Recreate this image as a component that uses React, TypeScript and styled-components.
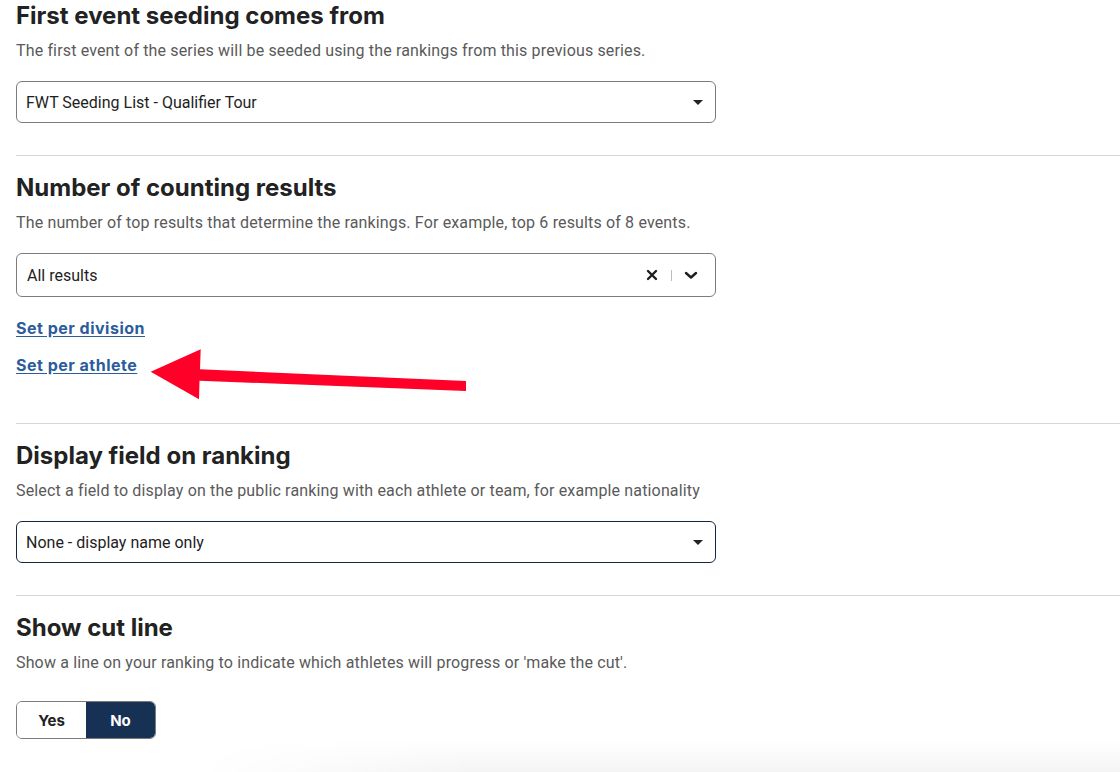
import React, { useState } from 'react';
import styled, { createGlobalStyle } from 'styled-components';

const GlobalStyle = createGlobalStyle`
  html, body {
    margin: 0;
    padding: 0;
    background: #ffffff;
  }
  body {
    font-family: Roboto, "Liberation Sans", Arial, sans-serif;
    color: #222222;
    overflow: hidden;
  }
`;

const Page = styled.div`
  padding-left: 16px;
  width: 1104px;
  min-height: 772px;
`;

const Section = styled.section<{ $first?: boolean; $bottom: number }>`
  border-top: ${({ $first }) => ($first ? 'none' : '1px solid #d6d6d6')};
  padding-top: ${({ $first }) => ($first ? '0' : '16px')};
  padding-bottom: ${({ $bottom }) => $bottom}px;
`;

const Title = styled.h2`
  margin: 0;
  font-family: Inter, "Liberation Sans", sans-serif;
  font-size: 24px;
  line-height: 32px;
  font-weight: 700;
  color: #222222;
`;

const Hint = styled.p`
  margin: 9px 0 0;
  font-size: 16px;
  line-height: 20px;
  letter-spacing: 0.15px;
  color: #5a5a5a;
`;

const SelectBox = styled.div<{ $height: number; $focused?: boolean }>`
  margin-top: 20px;
  width: 700px;
  box-sizing: border-box;
  height: ${({ $height }) => $height}px;
  border: 1px solid ${({ $focused }) => ($focused ? '#16263f' : '#7c7c7c')};
  border-radius: 6px;
  display: flex;
  align-items: center;
  padding: 0 12px 0 9px;
  font-size: 16px;
  color: #1e1e1e;
`;

const SelectValue = styled.span<{ $indent?: number }>`
  flex: 1;
  padding-left: ${({ $indent }) => $indent ?? 0}px;
`;

const Caret = styled.span`
  width: 0;
  height: 0;
  border-left: 5px solid transparent;
  border-right: 5px solid transparent;
  border-top: 5px solid #222222;
`;

const Indicators = styled.div`
  display: flex;
  align-items: center;
  margin-right: 5px;
  color: #1e1e1e;
`;

const IndicatorSep = styled.span`
  width: 1px;
  height: 11px;
  background: #bdbdbd;
  margin: 0 12px 0 13px;
`;

const LinkList = styled.div`
  position: relative;
  margin-top: 21px;
  display: flex;
  flex-direction: column;
  gap: 17px;
  align-items: flex-start;
`;

const TextLink = styled.a`
  font-family: Inter, "Liberation Sans", sans-serif;
  font-size: 16px;
  line-height: 20px;
  font-weight: 700;
  letter-spacing: 0.5px;
  color: #2b5c9b;
  text-decoration: underline;
  text-underline-offset: 2px;
  cursor: pointer;
`;

const Annotation = styled.svg`
  position: absolute;
  left: 132px;
  top: 28px;
  pointer-events: none;
`;

const Toggle = styled.div`
  margin-top: 28px;
  display: inline-flex;
  border: 1px solid #7c7c7c;
  border-radius: 6px;
  overflow: hidden;
  height: 38px;
  box-sizing: border-box;
`;

const ToggleOption = styled.button<{ $active: boolean }>`
  border: none;
  width: 69px;
  font-family: Inter, "Liberation Sans", sans-serif;
  font-size: 15px;
  font-weight: 700;
  background: ${({ $active }) => ($active ? '#163154' : '#ffffff')};
  color: ${({ $active }) => ($active ? '#ffffff' : '#222222')};
  cursor: pointer;
`;

const BottomFade = styled.div`
  position: fixed;
  left: 200px;
  right: 0;
  bottom: 0;
  height: 32px;
  pointer-events: none;
  background: linear-gradient(to bottom, rgba(0, 0, 0, 0), rgba(0, 0, 0, 0.045));
  -webkit-mask-image: linear-gradient(to right, transparent, #000 30%);
  mask-image: linear-gradient(to right, transparent, #000 30%);
`;

const ClearIcon = () => (
  <svg width="12" height="12" viewBox="0 0 12 12">
    <path d="M2 2 L10 10 M10 2 L2 10" stroke="#1e1e1e" strokeWidth="2.4" strokeLinecap="round" />
  </svg>
);

const ChevronIcon = () => (
  <svg width="14" height="10" viewBox="0 0 14 10">
    <path d="M2 3 L7 7.5 L12 3" stroke="#1e1e1e" strokeWidth="2.4" fill="none" strokeLinecap="round" strokeLinejoin="round" />
  </svg>
);

const App: React.FC = () => {
  const [cutLine, setCutLine] = useState(false);

  return (
    <>
      <GlobalStyle />
      <Page>
        <Section $first $bottom={32}>
          <Title>First event seeding comes from</Title>
          <Hint>The first event of the series will be seeded using the rankings from this previous series.</Hint>
          <SelectBox $height={42}>
            <SelectValue>FWT Seeding List - Qualifier Tour</SelectValue>
            <Caret />
          </SelectBox>
        </Section>

        <Section $bottom={48}>
          <Title>Number of counting results</Title>
          <Hint>The number of top results that determine the rankings. For example, top 6 results of 8 events.</Hint>
          <SelectBox $height={44}>
            <SelectValue $indent={1}>All results</SelectValue>
            <Indicators>
              <ClearIcon />
              <IndicatorSep />
              <ChevronIcon />
            </Indicators>
          </SelectBox>
          <LinkList>
            <TextLink>Set per division</TextLink>
            <TextLink>Set per athlete</TextLink>
            <Annotation width="320" height="56" viewBox="0 0 320 56">
              <polygon
                points="2.7,25.7 52.7,3.3 52,23.3 318,35 318,45 51.5,34.7 51,53.3"
                fill="#fe0028"
              />
            </Annotation>
          </LinkList>
        </Section>

        <Section $bottom={32}>
          <Title>Display field on ranking</Title>
          <Hint>Select a field to display on the public ranking with each athlete or team, for example nationality</Hint>
          <SelectBox $height={42} $focused>
            <SelectValue>None - display name only</SelectValue>
            <Caret />
          </SelectBox>
        </Section>

        <Section $bottom={32}>
          <Title>Show cut line</Title>
          <Hint>Show a line on your ranking to indicate which athletes will progress or 'make the cut'.</Hint>
          <Toggle>
            <ToggleOption $active={cutLine} onClick={() => setCutLine(true)}>Yes</ToggleOption>
            <ToggleOption $active={!cutLine} onClick={() => setCutLine(false)}>No</ToggleOption>
          </Toggle>
        </Section>
      </Page>
      <BottomFade />
    </>
  );
};

export default App;
